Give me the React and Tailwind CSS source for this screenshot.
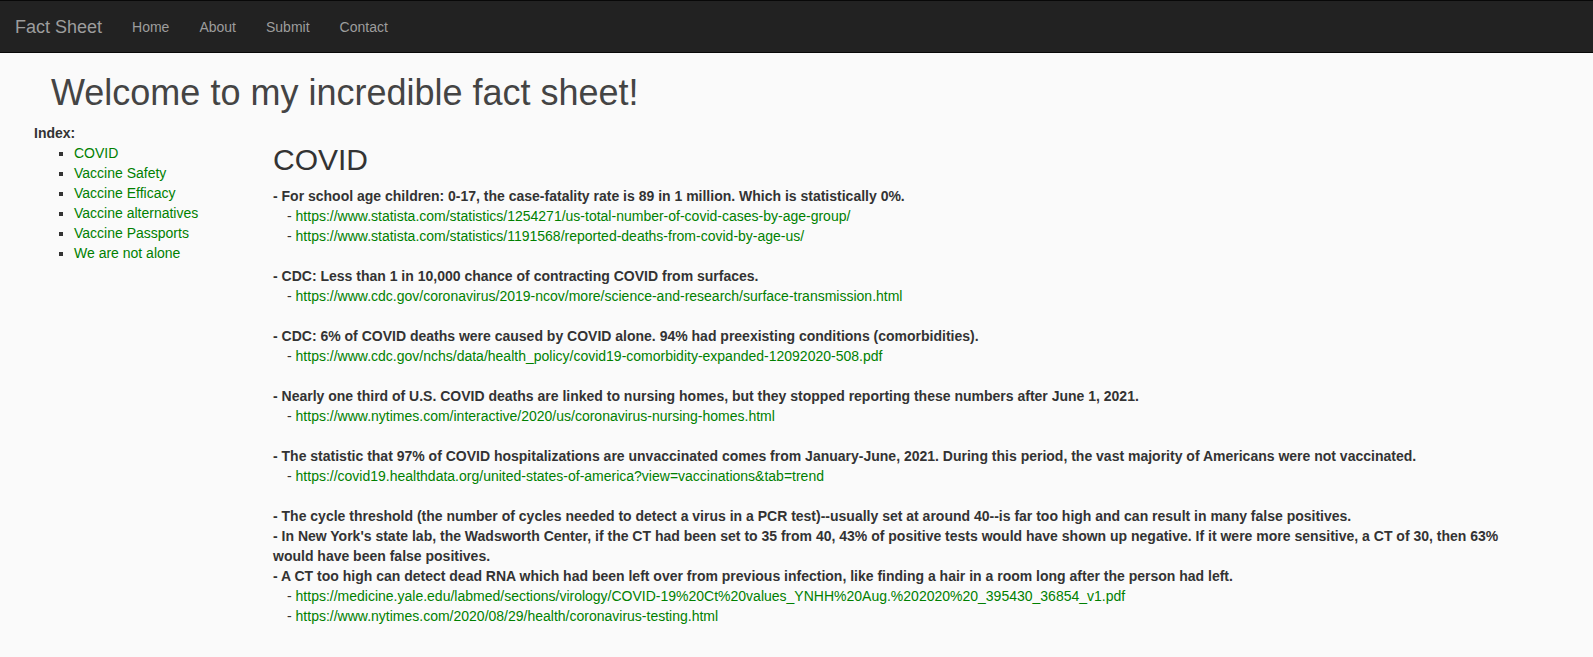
import React from "react";

const facts = [
  {
    lines: [
      "- For school age children: 0-17, the case-fatality rate is 89 in 1 million. Which is statistically 0%.",
    ],
    links: [
      "https://www.statista.com/statistics/1254271/us-total-number-of-covid-cases-by-age-group/",
      "https://www.statista.com/statistics/1191568/reported-deaths-from-covid-by-age-us/",
    ],
  },
  {
    lines: ["- CDC: Less than 1 in 10,000 chance of contracting COVID from surfaces."],
    links: ["https://www.cdc.gov/coronavirus/2019-ncov/more/science-and-research/surface-transmission.html"],
  },
  {
    lines: [
      "- CDC: 6% of COVID deaths were caused by COVID alone. 94% had preexisting conditions (comorbidities).",
    ],
    links: ["https://www.cdc.gov/nchs/data/health_policy/covid19-comorbidity-expanded-12092020-508.pdf"],
  },
  {
    lines: [
      "- Nearly one third of U.S. COVID deaths are linked to nursing homes, but they stopped reporting these numbers after June 1, 2021.",
    ],
    links: ["https://www.nytimes.com/interactive/2020/us/coronavirus-nursing-homes.html"],
  },
  {
    lines: [
      "- The statistic that 97% of COVID hospitalizations are unvaccinated comes from January-June, 2021. During this period, the vast majority of Americans were not vaccinated.",
    ],
    links: ["https://covid19.healthdata.org/united-states-of-america?view=vaccinations&tab=trend"],
  },
  {
    lines: [
      "- The cycle threshold (the number of cycles needed to detect a virus in a PCR test)--usually set at around 40--is far too high and can result in many false positives.",
      "- In New York's state lab, the Wadsworth Center, if the CT had been set to 35 from 40, 43% of positive tests would have shown up negative. If it were more sensitive, a CT of 30, then 63% would have been false positives.",
      "- A CT too high can detect dead RNA which had been left over from previous infection, like finding a hair in a room long after the person had left.",
    ],
    links: [
      "https://medicine.yale.edu/labmed/sections/virology/COVID-19%20Ct%20values_YNHH%20Aug.%202020%20_395430_36854_v1.pdf",
      "https://www.nytimes.com/2020/08/29/health/coronavirus-testing.html",
    ],
  },
];

const index = [
  "COVID",
  "Vaccine Safety",
  "Vaccine Efficacy",
  "Vaccine alternatives",
  "Vaccine Passports",
  "We are not alone",
];

export default function App() {
  return (
    <div className="min-h-screen bg-[#fafafa] text-[#333] text-[14px] leading-[20px] font-['Liberation_Sans',Arial,sans-serif]">
      <nav className="h-[53px] bg-[#222] border-y border-[#080808] flex items-center">
        <a className="px-[15px] text-[18px] text-[#9d9d9d]">Fact Sheet</a>
        <ul className="flex">
          {["Home", "About", "Submit", "Contact"].map((l) => (
            <li key={l}>
              <a className="block px-[15px] text-[#9d9d9d]">{l}</a>
            </li>
          ))}
        </ul>
      </nav>

      <h1 className="mt-[20px] mb-[10px] pl-[51px] text-[36px] leading-[1.1] text-[#444]">
        Welcome to my incredible fact sheet!
      </h1>

      <div className="flex pr-[70px]">
        <div className="w-[273px] shrink-0 pl-[34px]">
          <div className="font-bold">Index:</div>
          <ul className="list-[square] pl-[40px]">
            {index.map((i) => (
              <li key={i}>
                <a className="text-[#008000]">{i}</a>
              </li>
            ))}
          </ul>
        </div>

        <div className="flex-1 min-w-0">
          <h2 className="mt-[20px] mb-[10px] text-[30px] leading-[1.1] text-[#333]">COVID</h2>
          {facts.map((f, i) => (
            <div key={i}>
              {i > 0 && <div className="h-5" />}
              {f.lines.map((t) => (
                <div key={t} className="font-bold">
                  {t}
                </div>
              ))}
              {f.links.map((u) => (
                <div key={u} className="pl-[14px]">
                  - <a className="text-[#008000]">{u}</a>
                </div>
              ))}
            </div>
          ))}
        </div>
      </div>
    </div>
  );
}
